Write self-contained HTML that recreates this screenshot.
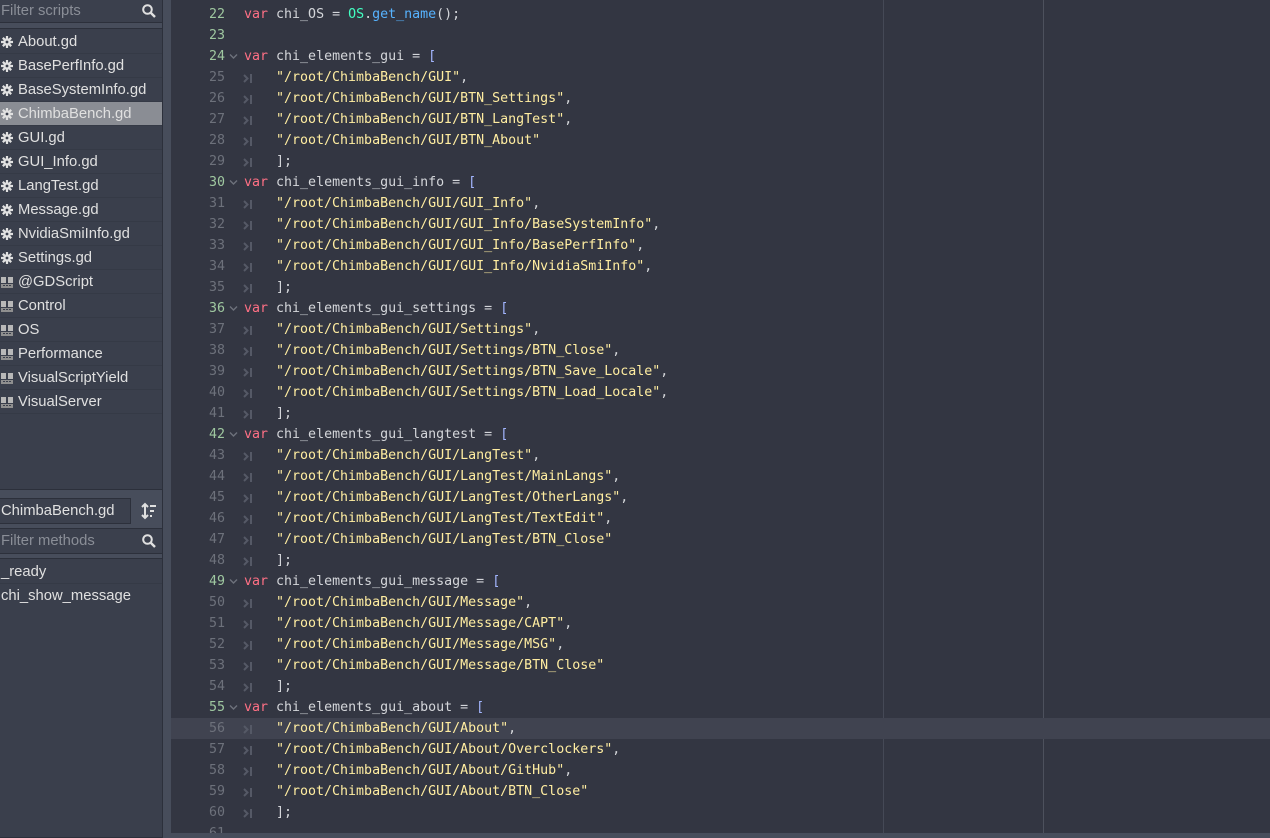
<!DOCTYPE html>
<html><head><style>
*{margin:0;padding:0;box-sizing:border-box}
body{width:1270px;height:833px;overflow:hidden;background:#474d5b;position:relative;font-family:"Liberation Sans","DejaVu Sans",sans-serif}
.box{position:absolute;background:#3b404d;border:1px solid #2c303b}
.ed{position:absolute;left:171px;top:0;width:1099px;height:833px;background:#333642;overflow:hidden}
.ln{position:absolute;left:0;height:21px;width:1099px;font-family:"DejaVu Sans Mono","Liberation Mono",monospace;font-size:13.3px;line-height:21px;white-space:pre}
.num{position:absolute;right:1045px;color:#6d717b}
.num.g{color:#9fc8a0}
.fold{position:absolute;left:58px;top:7px}
.tab{position:absolute;left:72px;top:7px}
.code{position:absolute;left:73px;color:#d4d6da}
.k{color:#ff7085}.s{color:#ffeda1}.t{color:#42ffc2}.f{color:#57b3ff}.b{color:#a3b6ff}
.item{position:absolute;left:0;width:162px;height:24px;line-height:24px;color:#e0e0e0;font-size:14.8px;padding-left:18px;border-bottom:1px solid #353a46}
.item.sel{background:#8a8d94}
.ic{position:absolute;left:1px;top:6px;width:12px;height:12px}
</style></head><body>
<div class="box" style="left:-1px;top:-1px;width:164px;height:24px"><span style="position:absolute;left:1px;top:3px;color:#8a8e97;font-size:14.8px">Filter scripts</span>
<svg style="position:absolute;left:141px;top:3px" width="16" height="16" viewBox="0 0 16 16"><circle cx="6.5" cy="6.5" r="4.3" fill="none" stroke="#e0e0e0" stroke-width="2"/><path d="M9.5 9.5L14 14" stroke="#e0e0e0" stroke-width="2.4"/></svg></div>
<div class="box" style="left:-1px;top:28px;width:164px;height:462px;background:#3a3f4c"></div>
<div id="list"></div>
<div class="box" style="left:-1px;top:498px;width:132px;height:26px"><span style="position:absolute;left:1px;top:4px;color:#e0e0e0;font-size:14.8px">ChimbaBench.gd</span></div>
<svg style="position:absolute;left:140px;top:502px" width="18" height="18" viewBox="0 0 18 18"><path d="M5 2v14M2 5l3-3 3 3M2 13l3 3 3-3" stroke="#e0e0e0" stroke-width="2" fill="none"/><path d="M10 4h6M10 9h4M10 14h2" stroke="#e0e0e0" stroke-width="2"/></svg>
<div class="box" style="left:-1px;top:528px;width:164px;height:26px"><span style="position:absolute;left:1px;top:4px;color:#8a8e97;font-size:14.8px">Filter methods</span>
<svg style="position:absolute;left:141px;top:4px" width="16" height="16" viewBox="0 0 16 16"><circle cx="6.5" cy="6.5" r="4.3" fill="none" stroke="#e0e0e0" stroke-width="2"/><path d="M9.5 9.5L14 14" stroke="#e0e0e0" stroke-width="2.4"/></svg></div>
<div class="box" style="left:-1px;top:558px;width:164px;height:280px;background:#3a3f4c"></div>
<div class="item" style="top:560px;padding-left:1px">_ready</div>
<div class="item" style="top:584px;padding-left:1px;border:none">chi_show_message</div>
<div style="position:absolute;left:162px;top:0;width:1px;height:833px;background:#2c303b"></div>
<div class="ed" id="ed">
<div style="position:absolute;left:712px;top:0;width:1px;height:833px;background:#454956"></div>
<div style="position:absolute;left:872px;top:0;width:1px;height:833px;background:#4d515d"></div>
</div>
<script>
const files=["About.gd","BasePerfInfo.gd","BaseSystemInfo.gd","ChimbaBench.gd","GUI.gd","GUI_Info.gd","LangTest.gd","Message.gd","NvidiaSmiInfo.gd","Settings.gd","@GDScript","Control","OS","Performance","VisualScriptYield","VisualServer"];
let h="";
const gear='<svg class="ic" viewBox="0 0 12 12"><circle cx="6" cy="6" r="3.8" fill="#e0e0e0"/><path d="M6 0v12M0 6h12M1.8 1.8l8.4 8.4M10.2 1.8l-8.4 8.4" stroke="#e0e0e0" stroke-width="2.2"/><circle cx="6" cy="6" r="1.4" fill="#3a3f4c"/></svg>';
const doc='<svg class="ic" viewBox="0 0 12 12"><path d="M0 1h5v6H0zM7 1h5v6H7z" fill="#b8b8b8"/><path d="M0 8h12v4H0z" fill="#8f8f8f"/><path d="M2 9.5h2M5 9.5h2M8 9.5h2" stroke="#3a3f4c" stroke-width="1"/></svg>';
files.forEach((f,i)=>{h+=`<div class="item${i==3?' sel':''}" style="top:${30+24*i}px">${i<10?gear:doc}${f}</div>`});
document.getElementById("list").innerHTML=h;
const S=x=>`<span class="s">"${x}"</span>`;
const L={22:'<span class="k">var</span> chi_OS = <span class="t">OS</span>.<span class="f">get_name</span>();',23:''};
function arr(n,name,items,keep){L[n]=`<span class="k">var</span> ${name} = <span class="b">[</span>`;items.forEach((it,i)=>L[n+1+i]='\t'+S(it)+',');if(!keep)L[n+items.length]=L[n+items.length].slice(0,-1);L[n+1+items.length]='\t];'}
const R="/root/ChimbaBench/GUI";
arr(24,"chi_elements_gui",[R,R+"/BTN_Settings",R+"/BTN_LangTest",R+"/BTN_About"]);
arr(30,"chi_elements_gui_info",[R+"/GUI_Info",R+"/GUI_Info/BaseSystemInfo",R+"/GUI_Info/BasePerfInfo",R+"/GUI_Info/NvidiaSmiInfo"],1);
arr(36,"chi_elements_gui_settings",[R+"/Settings",R+"/Settings/BTN_Close",R+"/Settings/BTN_Save_Locale",R+"/Settings/BTN_Load_Locale"],1);
arr(42,"chi_elements_gui_langtest",[R+"/LangTest",R+"/LangTest/MainLangs",R+"/LangTest/OtherLangs",R+"/LangTest/TextEdit",R+"/LangTest/BTN_Close"]);
arr(49,"chi_elements_gui_message",[R+"/Message",R+"/Message/CAPT",R+"/Message/MSG",R+"/Message/BTN_Close"]);
arr(55,"chi_elements_gui_about",[R+"/About",R+"/About/Overclockers",R+"/About/GitHub",R+"/About/BTN_Close"]);
L[61]='';
const fold='<svg class="fold" width="9" height="7" viewBox="0 0 9 7"><path d="M1 1.5l3.5 3.5 3.5-3.5" stroke="#6d717b" stroke-width="1.4" fill="none"/></svg>';
const tab='<svg class="tab" width="12" height="9" viewBox="0 0 12 9"><path d="M1 1l3.5 3.5L1 8" stroke="#555966" stroke-width="2" fill="none"/><path d="M8 0v9" stroke="#555966" stroke-width="2"/></svg>';
let e="";
for(let n=22;n<=61;n++){let c=L[n]||"";let g=c.startsWith('<span class="k">');let t=c.startsWith('\t');
e+=`<div class="ln" style="top:${4+(n-22)*21}px;${n==56?'background:#404350':''}"><span class="num${g||n<24?' g':''}">${n}</span>${g&&n>22?fold:''}${t?tab:''}<span class="code" style="left:${t?105:73}px">${t?c.slice(1):c}</span></div>`}
document.getElementById("ed").insertAdjacentHTML("beforeend",e);
</script>
</body></html>
